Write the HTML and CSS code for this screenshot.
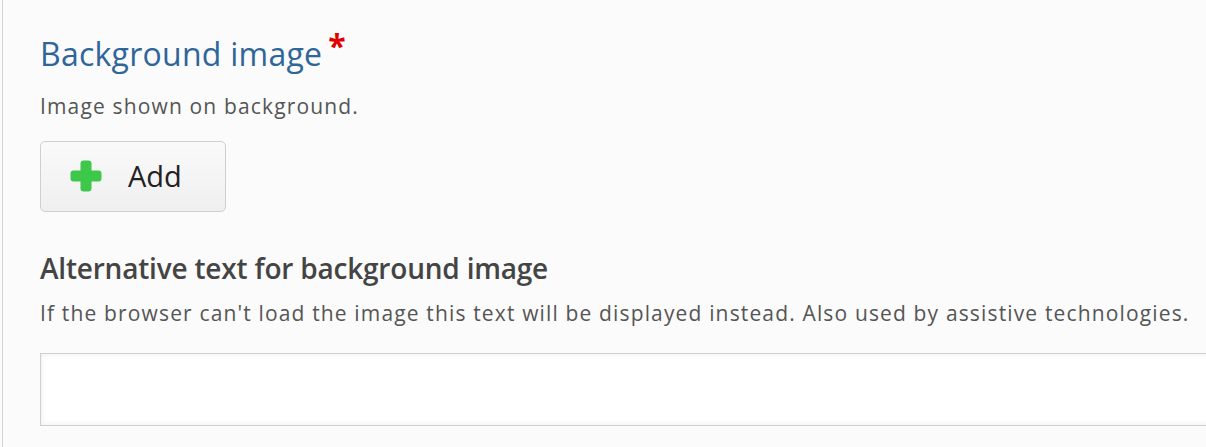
FILE: index.html
```html
<!DOCTYPE html>
<html>
<head>
<meta charset="utf-8">
<link rel="stylesheet" href="styles.css">
</head>
<body>
<div class="page">
  <div class="field">
    <div class="label-row">
      <span class="title">Background image</span><span class="req">*</span>
    </div>
    <div class="desc">Image shown on background.</div>
    <button class="add-btn" type="button">
      <svg class="plus" width="32" height="32" viewBox="0 0 32 32" aria-hidden="true">
        <path d="M13.5 0.5 Q10.5 0.5 10.5 3.5 L10.5 10.5 L3.5 10.5 Q0.5 10.5 0.5 13.5 L0.5 18.5 Q0.5 21.5 3.5 21.5 L10.5 21.5 L10.5 28.5 Q10.5 31.5 13.5 31.5 L18.5 31.5 Q21.5 31.5 21.5 28.5 L21.5 21.5 L28.5 21.5 Q31.5 21.5 31.5 18.5 L31.5 13.5 Q31.5 10.5 28.5 10.5 L21.5 10.5 L21.5 3.5 Q21.5 0.5 18.5 0.5 Z" fill="#3ec84b"/>
      </svg>
      <span class="add-text">Add</span>
    </button>
  </div>
  <div class="field field2">
    <div class="label2">Alternative text for background image</div>
    <div class="desc desc2">If the browser can't load the image this text will be displayed instead. Also used by assistive technologies.</div>
    <input class="text-input" type="text">
  </div>
</div>
</body>
</html>
```
FILE: styles.css
```css
html, body {
  margin: 0;
  padding: 0;
  background: #fbfbfb;
  font-family: "Open Sans", "DejaVu Sans", sans-serif;
  overflow: hidden;
}
.page {
  margin-left: 2px;
  border-left: 1px solid #d4d4d4;
  height: 447px;
  padding-left: 37px;
  padding-top: 30px;
  box-sizing: border-box;
}
.label-row {
  display: flex;
  align-items: flex-start;
  height: 48px;
}
.title {
  font-size: 32px;
  color: #2f6699;
  line-height: 48px;
  letter-spacing: 0.25px;
}
.req {
  color: #e00000;
  font-size: 32px;
  font-weight: 700;
  line-height: 32px;
  margin-left: 6px;
}
.desc {
  font-size: 21px;
  color: #555;
  letter-spacing: 1.15px;
  line-height: 30px;
  margin-top: 13px;
}
.add-btn {
  margin-top: 20px;
  width: 186px;
  height: 71px;
  border: 1px solid #cfcfcf;
  border-radius: 5px;
  background: linear-gradient(#fafafa, #efefef);
  display: flex;
  align-items: center;
  padding: 0 0 2px 29px;
  font-family: inherit;
  cursor: pointer;
}
.plus { display: block; }
.add-text {
  margin-left: 26px;
  font-size: 29px;
  color: #222;
}
.field2 { margin-top: 37px; }
.label2 {
  font-size: 28px;
  font-weight: 600;
  color: #444;
  line-height: 38px;
  letter-spacing: -0.2px;
}
.desc2 { margin-top: 11px; }
.text-input {
  display: block;
  margin-top: 25px;
  width: 1200px;
  height: 73px;
  box-sizing: border-box;
  border: 1px solid #cfcfcf;
  border-right: none;
  background: #fff;
  box-shadow: inset 0 0 6px rgba(0,0,0,0.08);
}
```
